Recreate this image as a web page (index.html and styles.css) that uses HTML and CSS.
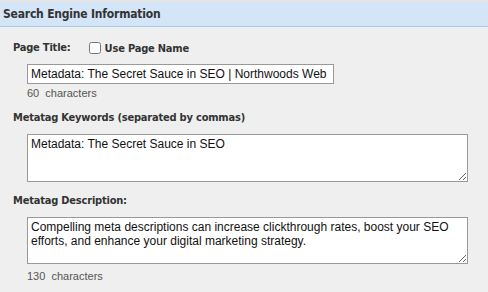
FILE: index.html
```html
<!DOCTYPE html>
<html lang="en">
<head>
  <meta charset="UTF-8" />
  <title>Search Engine Information</title>
  <link rel="stylesheet" href="styles.css">
</head>
<body>
  <div class="panel">
    <div class="panel-head">Search Engine Information</div>

    <div class="panel-body">
      <!-- Page title -->
      <div class="field">
        <div class="label-row">
          <label class="label" for="pageTitle">Page Title:</label>
          <label class="check"><input type="checkbox" id="usePageName"> Use Page Name</label>
        </div>
        <input type="text" id="pageTitle" class="text-input" value="Metadata: The Secret Sauce in SEO | Northwoods Web">
        <div class="count">60&nbsp; characters</div>
      </div>

      <!-- Keywords -->
      <div class="field">
        <label class="label" for="keywords">Metatag Keywords (separated by commas)</label>
        <textarea id="keywords" class="text-area">Metadata: The Secret Sauce in SEO</textarea>
      </div>

      <!-- Description -->
      <div class="field">
        <label class="label" for="description">Metatag Description:</label>
        <textarea id="description" class="text-area short">Compelling meta descriptions can increase clickthrough rates, boost your SEO efforts, and enhance your digital marketing strategy.</textarea>
        <div class="count">130&nbsp; characters</div>
      </div>
    </div>
  </div>
</body>
</html>
```

FILE: styles.css
```css
body {
  margin: 0;
  padding: 0;
  background-color: #efefef;
  font-family: "DejaVu Sans Condensed", "DejaVu Sans", Tahoma, sans-serif;
}

.panel {
  border-top: 2px solid #e4e4e4;
}

.panel-head {
  background: #d4e5f7;
  border-bottom: 1px solid #a8c8ee;
  color: #333;
  font-size: 12px;
  font-weight: bold;
  height: 24px;
  line-height: 24px;
  padding-left: 3px;
  letter-spacing: -0.2px;
}

.panel-body {
  padding: 13px 0 0 13px;
}

.field {
  margin-bottom: 11px;
}

.label-row {
  display: flex;
  align-items: center;
  gap: 18px;
}

.label {
  display: block;
  color: #333;
  font-size: 11px;
  font-weight: bold;
  letter-spacing: -0.2px;
  line-height: 16px;
}

.check {
  display: flex;
  align-items: center;
  gap: 4px;
  color: #333;
  font-size: 11px;
  font-weight: bold;
  letter-spacing: -0.2px;
}

.check input {
  margin: 0;
  width: 12px;
  height: 12px;
}

.text-input,
.text-area {
  display: block;
  box-sizing: border-box;
  margin: 8px 0 0 14px;
  border: 1px solid #999;
  background: #fff;
  color: #111;
  font-family: "Liberation Sans", Arial, sans-serif;
  font-size: 12px;
  padding: 2px 3px;
}

.text-input {
  width: 307px;
  height: 20px;
}

.text-area {
  width: 441px;
  height: 48px;
  resize: vertical;
}

.text-area.short {
  height: 47px;
}

.count {
  margin: 3px 0 4px 14px;
  color: #555;
  font-family: "Liberation Sans", Arial, sans-serif;
  font-size: 11px;
}

.text-area + .count {
  margin-top: 6px;
}
```
